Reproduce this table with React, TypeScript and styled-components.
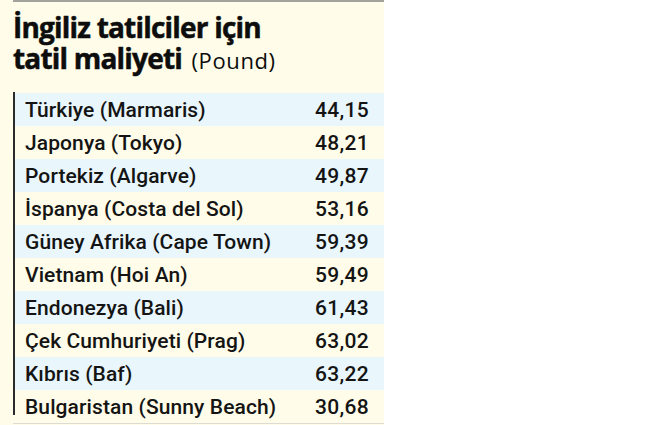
import styled, { createGlobalStyle } from "styled-components";

const GlobalStyle = createGlobalStyle`
  html, body {
    margin: 0;
    padding: 0;
    background: #ffffff;
  }
`;

const rows = [
  { place: "Türkiye (Marmaris)", cost: "44,15" },
  { place: "Japonya (Tokyo)", cost: "48,21" },
  { place: "Portekiz (Algarve)", cost: "49,87" },
  { place: "İspanya (Costa del Sol)", cost: "53,16" },
  { place: "Güney Afrika (Cape Town)", cost: "59,39" },
  { place: "Vietnam (Hoi An)", cost: "59,49" },
  { place: "Endonezya (Bali)", cost: "61,43" },
  { place: "Çek Cumhuriyeti (Prag)", cost: "63,02" },
  { place: "Kıbrıs (Baf)", cost: "63,22" },
  { place: "Bulgaristan (Sunny Beach)", cost: "30,68" },
];

const App = () => {
  return (
    <>
      <GlobalStyle />
      <Card>
        <TopRule />
        <Title>
          <TitleLine>İngiliz tatilciler için</TitleLine>
          <TitleLine>
            tatil maliyeti <Unit>(Pound)</Unit>
          </TitleLine>
        </Title>
        <Table>
          {rows.map((row, i) => (
            <Row key={row.place} $shaded={i % 2 === 0}>
              <Place>{row.place}</Place>
              <Cost>{row.cost}</Cost>
            </Row>
          ))}
        </Table>
        <BottomRule />
      </Card>
    </>
  );
};

export default App;

const Card = styled.div`
  width: 371px;
  height: 425px;
  padding-left: 13px;
  background: #fffde9;
  display: flex;
  flex-direction: column;
`;

const TopRule = styled.div`
  height: 2px;
  background: #a3a39c;
`;

const Title = styled.h1`
  margin: 0;
  padding-top: 10px;
  height: 91px;
  box-sizing: border-box;
  display: flex;
  flex-direction: column;
  font-family: "Open Sans", "Liberation Sans", sans-serif;
  font-weight: 700;
  font-size: 28px;
  letter-spacing: -0.8px;
  color: #0d0d0d;
  -webkit-text-stroke: 0.5px #0d0d0d;
`;

const TitleLine = styled.div`
  height: 31px;
  line-height: 31px;
  white-space: nowrap;
`;

const Unit = styled.span`
  margin-left: 3px;
  font-weight: 400;
  font-size: 22px;
  letter-spacing: 0.6px;
  -webkit-text-stroke: 0;
`;

const Table = styled.div`
  position: relative;
  display: flex;
  flex-direction: column;
  padding-left: 1px;

  &::before {
    content: "";
    position: absolute;
    left: 0;
    top: -1px;
    bottom: 8px;
    width: 1.5px;
    background: #2b2b2b;
  }
`;

const Row = styled.div<{ $shaded: boolean }>`
  height: 33px;
  display: flex;
  align-items: center;
  justify-content: space-between;
  padding: 0 15px 0 11px;
  background: ${(p) => (p.$shaded ? "#e9f6fb" : "#fffde9")};
  font-family: Roboto, "Liberation Sans", sans-serif;
  font-weight: 500;
  font-size: 21px;
  color: #141414;
`;

const Place = styled.span`
  letter-spacing: 0.1px;
`;

const Cost = styled.span`
  letter-spacing: 0.3px;
`;

const BottomRule = styled.div`
  height: 1px;
  background: #dcdcd4;
`;
